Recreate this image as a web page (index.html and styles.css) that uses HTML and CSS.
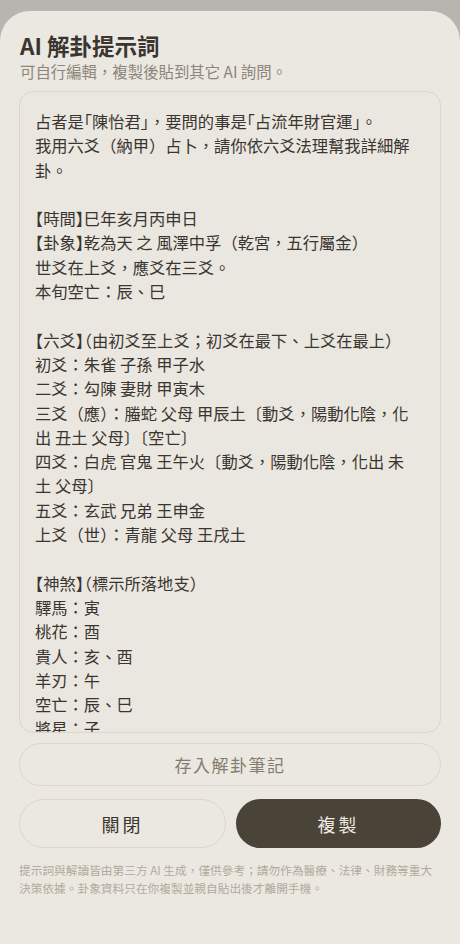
FILE: index.html
```html
<!DOCTYPE html>
<html lang="zh-Hant">
<head>
<meta charset="utf-8">
<title>AI 解卦提示詞</title>
<link rel="stylesheet" href="styles.css">
</head>
<body>
<div class="sheet">
  <h1 class="title">AI 解卦提示詞</h1>
  <p class="subtitle">可自行編輯，複製後貼到其它 AI 詢問。</p>
  <div class="prompt">
    <div class="ln">占者是<span class="hb">「</span>陳怡君<span class="hb">」</span>，要問的事是<span class="hb">「</span>占流年財官運<span class="hb">」</span>。</div>
    <div class="ln">我用六爻（納甲）占卜，請你依六爻法理幫我詳細解卦。</div>
    <div class="ln blank"></div>
    <div class="ln"><span class="hb">【</span>時間<span class="hb">】</span>巳年亥月丙申日</div>
    <div class="ln"><span class="hb">【</span>卦象<span class="hb">】</span>乾為天 之 風澤中孚（乾宮，五行屬金）</div>
    <div class="ln">世爻在上爻，應爻在三爻。</div>
    <div class="ln">本旬空亡：辰、巳</div>
    <div class="ln blank"></div>
    <div class="ln"><span class="hb">【</span>六爻<span class="hb">】</span>（由初爻至上爻；初爻在最下、上爻在最上）</div>
    <div class="ln">初爻：朱雀 子孫 甲子水</div>
    <div class="ln">二爻：勾陳 妻財 甲寅木</div>
    <div class="ln">三爻（應）：螣蛇 父母 甲辰土〔動爻，陽動化陰，化出 丑土 父母〕〔空亡〕</div>
    <div class="ln">四爻：白虎 官鬼 王午火〔動爻，陽動化陰，化出 未土 父母〕</div>
    <div class="ln">五爻：玄武 兄弟 王申金</div>
    <div class="ln">上爻（世）：青龍 父母 王戌土</div>
    <div class="ln blank"></div>
    <div class="ln"><span class="hb">【</span>神煞<span class="hb">】</span>（標示所落地支）</div>
    <div class="ln">驛馬：寅</div>
    <div class="ln">桃花：酉</div>
    <div class="ln">貴人：亥、酉</div>
    <div class="ln">羊刃：午</div>
    <div class="ln">空亡：辰、巳</div>
    <div class="ln">將星：子</div>
  </div>
  <button class="btn btn-note" type="button">存入解卦筆記</button>
  <div class="actions">
    <button class="btn btn-close" type="button">關閉</button>
    <button class="btn btn-copy" type="button">複製</button>
  </div>
  <p class="disclaimer">提示詞與解讀皆由第三方 AI 生成，僅供參考；請勿作為醫療、法律、財務等重大決策依據。卦象資料只在你複製並親自貼出後才離開手機。</p>
</div>
</body>
</html>
```
FILE: styles.css
```css
html, body {
  margin: 0;
  padding: 0;
  background: #b8b5b0;
}
body {
  font-family: "Noto Sans CJK TC", "Noto Sans", sans-serif;
  color: #3a3530;
}
.sheet {
  margin-top: 11px;
  min-height: 933px;
  box-sizing: border-box;
  background: #ebe8e1;
  border-radius: 30px 30px 0 0;
  padding: 19px 19px 20px;
  display: flex;
  flex-direction: column;
}
.title {
  margin: 0;
  font-size: 22.5px;
  line-height: 30px;
  font-weight: 700;
  color: #3a3530;
  padding-left: 1px;
}
.subtitle {
  margin: 0;
  font-size: 15.4px;
  line-height: 22px;
  color: #8b857b;
  padding-left: 1px;
}
.prompt {
  margin-top: 9px;
  height: 642px;
  box-sizing: border-box;
  border: 1px solid #ddd6c7;
  border-radius: 14px;
  background: #eae7e0;
  padding: 17px 20px 17px 15px;
  font-size: 16.3px;
  line-height: 24.3px;
  color: #3a3530;
  overflow: hidden;
}
.ln {
  min-height: 24.3px;
}
.hb {
  font-feature-settings: "halt" 1;
}
.btn {
  font-family: "Noto Sans CJK TC", "Noto Sans", sans-serif;
  border-radius: 999px;
  cursor: pointer;
  box-sizing: border-box;
}
.btn-note {
  margin-top: 10px;
  height: 43px;
  width: 100%;
  border: 1px solid #ddd6c7;
  background: transparent;
  color: #857c70;
  font-size: 17px;
  letter-spacing: 1.5px;
}
.actions {
  margin-top: 13px;
  display: flex;
  gap: 10px;
}
.actions .btn {
  flex: 1;
  height: 49px;
  font-size: 18px;
  letter-spacing: 3px;
}
.btn-close {
  border: 1px solid #ddd6c7;
  background: transparent;
  color: #3a3530;
}
.btn-copy {
  border: none;
  background: #4a4338;
  color: #efebe3;
}
.disclaimer {
  margin: 13px 0 0;
  font-size: 11.7px;
  line-height: 18px;
  color: #b3aa9b;
}
```
